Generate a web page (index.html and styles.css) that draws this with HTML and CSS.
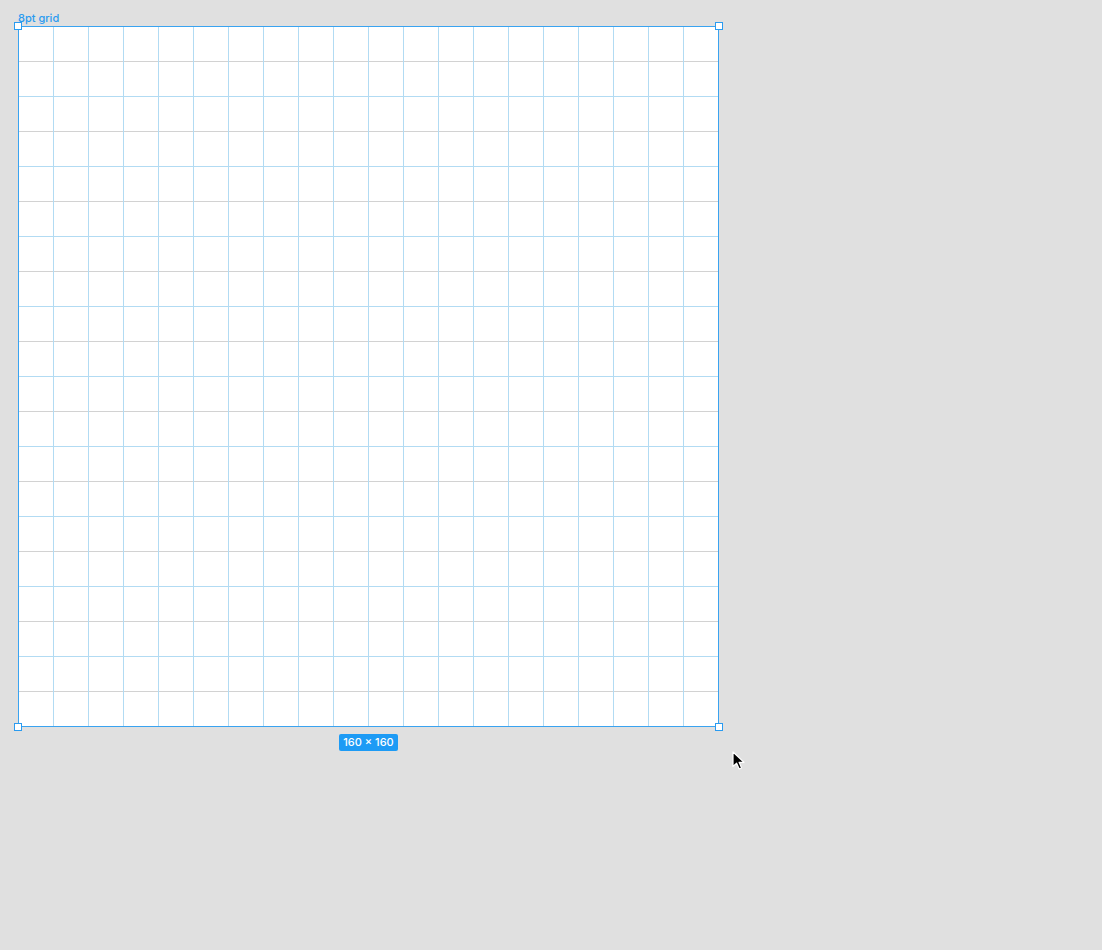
FILE: index.html
```html
<!DOCTYPE html>
<html>
<head>
<meta charset="utf-8">
<link rel="stylesheet" href="styles.css">
</head>
<body>
<div class="canvas">
  <div class="artboard">
    <div class="label">8pt grid</div>
    <div class="frame">
      <span class="handle tl"></span>
      <span class="handle tr"></span>
      <span class="handle bl"></span>
      <span class="handle br"></span>
    </div>
    <div class="size-row"><span class="badge">160 × 160</span></div>
  </div>
  <svg class="cursor" width="14" height="20" viewBox="0 0 14 20">
    <path d="M1 1 L1 15.5 L4.6 12.2 L7.2 18 L9.6 17 L7.1 11.3 L12 11.3 Z" fill="#000" stroke="#fff" stroke-width="1.2" stroke-linejoin="round"/>
  </svg>
</div>
</body>
</html>
```
FILE: styles.css
```css
html, body {
  margin: 0;
  padding: 0;
  background: #e0e0e0;
}
.canvas {
  position: relative;
  width: 1102px;
  height: 950px;
}
.artboard {
  display: flex;
  flex-direction: column;
  width: 701px;
  padding: 12px 0 0 18px;
}
.label {
  font-family: Inter, "Noto Sans", sans-serif;
  font-size: 11px;
  font-weight: 500;
  line-height: 13px;
  height: 14px;
  color: #2a9bf0;
}
.frame {
  position: relative;
  width: 699px;
  height: 699px;
  border: 1px solid #3aa3f0;
  background-color: #ffffff;
  background-image:
    repeating-linear-gradient(to right, transparent 0, transparent 34px, #b2dbf3 34px, #b2dbf3 35px),
    repeating-linear-gradient(to bottom, transparent 0, transparent 34px, #d2d2d2 34px, #d2d2d2 35px, transparent 35px, transparent 69px, #b2dbf3 69px, #b2dbf3 70px);
}
.handle {
  position: absolute;
  width: 6px;
  height: 6px;
  background: #fff;
  border: 1px solid #2a9bf0;
}
.handle.tl { left: -5px; top: -5px; }
.handle.tr { right: -5px; top: -5px; }
.handle.bl { left: -5px; bottom: -5px; }
.handle.br { right: -5px; bottom: -5px; }
.size-row {
  display: flex;
  justify-content: center;
  padding-top: 7px;
}
.badge {
  font-family: Inter, "Noto Sans", sans-serif;
  font-size: 11px;
  font-weight: 500;
  line-height: 17px;
  height: 17px;
  padding: 0 4px;
  background: #1d9bf5;
  color: #fff;
  border-radius: 2px;
}
.cursor {
  position: absolute;
  left: 732px;
  top: 751px;
}
```
